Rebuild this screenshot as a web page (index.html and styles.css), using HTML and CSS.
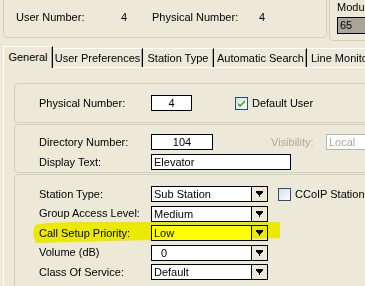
FILE: index.html
```html
<!DOCTYPE html>
<html lang="en">
<head>
    <meta charset="UTF-8">
    <title>Station Properties</title>
    <link rel="stylesheet" href="styles.css">
</head>
<body>

    <div class="sus">
        <div class="info">
            <span class="eticheta-u">User Number:</span>
            <span class="valoare">4</span>
            <span class="eticheta-f">Physical Number:</span>
            <span>4</span>
        </div>
        <div class="modul">
            <div>Module</div>
            <div class="camp-modul">65</div>
        </div>
    </div>

    <div class="taburi">
        <div class="tab activ t1">General</div>
        <div class="tab t2">User Preferences</div>
        <div class="tab t3">Station Type</div>
        <div class="tab t4">Automatic Search</div>
        <div class="tab t5">Line Monitoring</div>
    </div>

    <div class="panou">

        <div class="grup g1">
            <div class="rand">
                <div class="eticheta">Physical Number:</div>
                <div class="camp mic">4</div>
                <div class="bifa bifat">
                    <svg width="11" height="11" viewBox="0 0 11 11"><path d="M2 5l2 2 5-5v2l-5 5-2-2z" fill="#21a121"/></svg>
                </div>
                <span class="text-bifa">Default User</span>
            </div>
        </div>

        <div class="grup g2">
            <div class="rand">
                <div class="eticheta">Directory Number:</div>
                <div class="camp mediu">104</div>
                <div class="inactiv">Visibility:</div>
                <div class="camp local">Local</div>
            </div>
            <div class="rand">
                <div class="eticheta">Display Text:</div>
                <div class="camp lung">Elevator</div>
            </div>
        </div>

        <div class="grup g3">
            <div class="rand">
                <div class="eticheta">Station Type:</div>
                <div class="lista"><span>Sub Station</span><div class="buton"><svg width="7" height="6" viewBox="0 0 7 6"><path d="M0 0h7v2h-1v1h-1v1h-1v2h-1v-2h-1v-1h-1v-1h-1z"/></svg></div></div>
                <div class="bifa"></div>
                <span class="text-bifa">CCoIP Station</span>
            </div>
            <div class="rand">
                <div class="eticheta">Group Access Level:</div>
                <div class="lista"><span>Medium</span><div class="buton"><svg width="7" height="6" viewBox="0 0 7 6"><path d="M0 0h7v2h-1v1h-1v1h-1v2h-1v-2h-1v-1h-1v-1h-1z"/></svg></div></div>
            </div>
            <div class="rand">
                <div class="eticheta">Call Setup Priority:</div>
                <div class="lista galben"><span>Low</span><div class="buton"><svg width="7" height="6" viewBox="0 0 7 6"><path d="M0 0h7v2h-1v1h-1v1h-1v2h-1v-2h-1v-1h-1v-1h-1z"/></svg></div></div>
            </div>
            <div class="rand">
                <div class="eticheta">Volume (dB)</div>
                <div class="lista"><span class="zero">0</span><div class="buton"><svg width="7" height="6" viewBox="0 0 7 6"><path d="M0 0h7v2h-1v1h-1v1h-1v2h-1v-2h-1v-1h-1v-1h-1z"/></svg></div></div>
            </div>
            <div class="rand">
                <div class="eticheta">Class Of Service:</div>
                <div class="lista"><span>Default</span><div class="buton"><svg width="7" height="6" viewBox="0 0 7 6"><path d="M0 0h7v2h-1v1h-1v1h-1v2h-1v-2h-1v-1h-1v-1h-1z"/></svg></div></div>
            </div>

            <div class="marker"></div>
        </div>

    </div>

</body>
</html>
```

FILE: styles.css
```css
body {
    margin: 0;
    background-color: #ece9d8;
    font-family: "Liberation Sans", Arial, sans-serif;
    font-size: 11px;
    line-height: 13px;
    color: #000;
    overflow: hidden;
    width: 365px;
    height: 286px;
}

.sus {
    display: flex;
    margin-top: -10px;
    white-space: nowrap;
}
.info {
    box-sizing: border-box;
    margin-left: 3px;
    width: 324px;
    height: 48px;
    border: 1px solid #d0d0bf;
    border-radius: 4px;
    padding: 20px 0 0 12px;
    display: flex;
    flex-shrink: 0;
}
.eticheta-u { width: 105px; }
.valoare { width: 31px; }
.eticheta-f { width: 107px; }

.modul {
    box-sizing: border-box;
    margin-left: 2px;
    width: 60px;
    height: 51px;
    border: 1px solid #d0d0bf;
    border-right: none;
    border-radius: 4px 0 0 4px;
    padding: 10px 0 0 7px;
    flex-shrink: 0;
    overflow: hidden;
}
.camp-modul {
    box-sizing: border-box;
    margin-top: 3px;
    height: 17px;
    border: 1px solid #000;
    border-right: none;
    background-color: #a9a699;
    padding: 1px 0 0 2px;
}

.taburi {
    display: flex;
    align-items: flex-end;
    margin: 5px 0 0 3px;
    height: 21px;
    white-space: nowrap;
}
.tab {
    box-sizing: border-box;
    height: 19px;
    border-top: 1px solid #fff;
    border-right: 1px solid #000;
    box-shadow: inset -1px 0 #aca899;
    padding-top: 3px;
    text-align: center;
    flex-shrink: 0;
}
.tab.activ {
    height: 22px;
    margin-bottom: -1px;
    border-left: 1px solid #fff;
    padding-top: 4px;
    background-color: #ece9d8;
    position: relative;
    z-index: 1;
}
.t1 { width: 50px; }
.t2 { width: 90px; }
.t3 { width: 71px; }
.t4 { width: 93px; text-align: left; padding-left: 3px; }
.t5 { width: 90px; text-align: left; padding-left: 4px; }

.panou {
    margin-left: 3px;
    border-top: 1px solid #fff;
    border-left: 1px solid #fff;
    height: 240px;
}

.grup {
    box-sizing: border-box;
    margin-left: 10px;
    width: 400px;
    border: 1px solid #d0d0bf;
    border-radius: 4px;
    display: flex;
    flex-direction: column;
    padding-left: 24px;
}
.g1 {
    margin-top: 15px;
    height: 40px;
    padding-top: 11px;
}
.g2 {
    margin-top: 1px;
    height: 49px;
    padding-top: 9px;
    gap: 4px;
}
.g3 {
    margin-top: 1px;
    height: 130px;
    padding-top: 11px;
    gap: 3.5px;
    position: relative;
}

.rand {
    display: flex;
    align-items: center;
    height: 16px;
    white-space: nowrap;
}
.eticheta {
    width: 112px;
    flex-shrink: 0;
}

.camp {
    box-sizing: border-box;
    height: 16px;
    border: 1px solid #000;
    background-color: #fff;
    line-height: 14px;
    flex-shrink: 0;
}
.camp.mic { width: 41px; text-align: center; }
.camp.mediu { width: 62px; text-align: center; }
.camp.lung { width: 140px; padding-left: 2px; }
.camp.local {
    width: 60px;
    border-color: #b9b6a8;
    color: #aca899;
    padding-left: 2px;
}
.inactiv {
    color: #aca899;
    margin-left: 58px;
    width: 55px;
    flex-shrink: 0;
}

.bifa {
    box-sizing: border-box;
    width: 13px;
    height: 13px;
    border: 1px solid #1c5180;
    background: linear-gradient(135deg, #dcdcd7, #fff);
    flex-shrink: 0;
    display: flex;
    align-items: center;
    justify-content: center;
}
.g1 .bifa { margin-left: 43px; }
.g3 .bifa { margin-left: 10px; }
.text-bifa { margin-left: 4px; }

.lista {
    box-sizing: border-box;
    width: 117px;
    height: 16px;
    border: 1px solid #000;
    background-color: #fff;
    display: flex;
    line-height: 14px;
    flex-shrink: 0;
}
.lista span {
    flex: 1;
    padding-left: 2px;
}
.lista span.zero { padding-left: 9px; }
.lista.galben { background-color: #ffff00; }
.buton {
    width: 15px;
    border-left: 1px solid #000;
    background-color: #ece9d8;
    display: flex;
    align-items: center;
    justify-content: center;
}

.marker {
    position: absolute;
    left: 18px;
    top: 47px;
    width: 247px;
    height: 21px;
    background-color: #ffff00;
    mix-blend-mode: multiply;
    clip-path: polygon(2px 3px, 14px 1px, 40px 0, 247px 0, 247px 16px, 210px 17px, 120px 18px, 40px 20px, 3px 21px, 0 12px);
}
```
